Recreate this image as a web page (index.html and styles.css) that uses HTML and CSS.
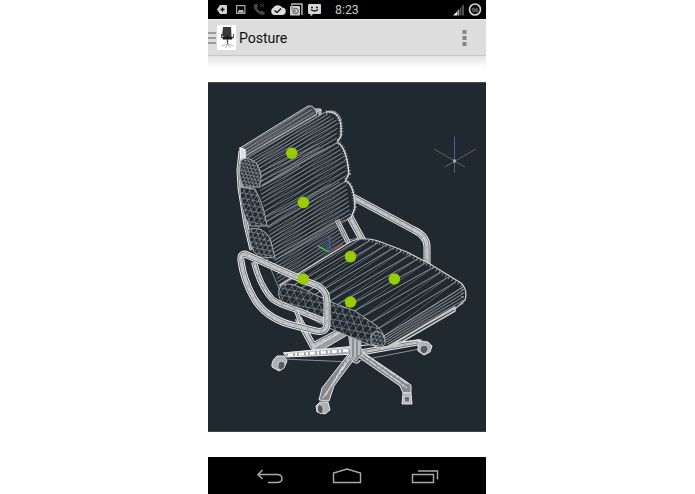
FILE: index.html
```html
<!DOCTYPE html>
<html lang="en">
<head>
<meta charset="utf-8">
<title>Posture</title>
<link rel="stylesheet" href="styles.css">
</head>
<body>
<main class="phone">
  <header class="status">
    <svg class="notifications" width="115" height="19" viewBox="208 0 115 19">
      <path d="M220 5h6q1 0 1 1v7q0 1-1 1h-6l-3-4.500z" fill="#d2d2d2"/><path d="M220.500 9.500h4M222.500 7.500v4" stroke="#111" stroke-width="1.300"/>
      <path d="M236 5h9.500v9H236zm1.200 1.200v6.600h7.100V6.200z" fill="#aaa" fill-rule="evenodd"/><path d="M237.500 12.500l2-3 1.500 1 1.500-1 1.500 3z" fill="#ccc"/>
      <path d="M255 4q-2 1-1 4 3 6 9 7 2 0 2-2l-3-2.500-2 1-3-3 1-2-1-2.500z" fill="#484848"/><path d="M260 7l4-3m0 3l-4-3" stroke="#3d3d3d"/>
      <path d="M274 15a4 4 0 0 1-.5-7.500 5 5 0 0 1 8.500 0 3.700 3.700 0 0 1 0 7.500z" fill="#ddd"/><path d="M274.500 10.500l2.500 2 4-4" fill="none" stroke="#222" stroke-width="1.500"/>
      <path d="M292 5.500V4h10v10h-1" fill="none" stroke="#bbb" stroke-width="1.500"/><rect x="290" y="6" width="10" height="9.500" rx="1" fill="#ccc"/><circle cx="295.500" cy="11" r="2.700" fill="none" stroke="#555"/><path d="M291 8h2m2 1.500v3" stroke="#555"/>
      <path d="M309 4h11q1 0 1 1v8q0 1-1 1h-7l-2.500 2.500V14H309q-1 0-1-1V5q0-1 1-1z" fill="#d5d5d5"/><path d="M311 7.500h2m3 0h2m-7 2q3.500 3 7 0" fill="none" stroke="#222" stroke-width="1.300"/>
    </svg>
    <time class="clock">8:23</time>
    <svg class="signal" width="36" height="19" viewBox="450 0 36 19">
      <path d="M453 15.500l4-4v4z" fill="#eee"/><path d="M457.300 11l2-2v6.500h-2z" fill="#aaa"/><path d="M459.800 8.500l1.700-1.700v8.700h-1.700zm2.200-2.200L464 4v11.500h-2z" fill="#505050"/>
      <circle cx="475" cy="9.500" r="5.500" fill="#111" stroke="#d8d8d8" stroke-width="1.600"/><text class="charge" x="475" y="11.700" text-anchor="middle">96</text>
    </svg>
  </header>
  <nav class="bar">
    <svg class="drawer" width="8" height="14" viewBox="0 0 8 14"><path d="M0 2h8M0 7h8M0 12h8" stroke="#858585" stroke-width="1.600"/></svg>
    <svg class="logo" width="19" height="25" viewBox="217 25 19 25">
      <path fill="#fff" d="M217 25h19v25h-19z"/><path d="M223 27h8l.5 9q-4.500 1.500-9.500 0z" fill="#3a3838"/><path d="M222 37q6-2 11 0l-1 2.500h-9z" fill="#1c1b1b"/><path d="M221.500 38v-4m12 4v-4" stroke="#555"/><path d="M227.500 39v5" stroke="#444" stroke-width="1.300"/><path d="M227.500 44l-6 2m6-2l6 2m-6-2l-2 4m2-4l3 4" fill="none" stroke="#aaa" stroke-width=".8"/>
    </svg>
    <h1 class="title">Posture</h1>
    <svg class="more" width="5" height="16" viewBox="0 0 5 16"><path d="M.5 0h4v4h-4zm0 6h4v4h-4zm0 6h4v4h-4z" fill="#858585"/></svg>
  </nav>
  <section class="content">
    <svg class="drawing" width="278" height="350" viewBox="208 82 278 350">
      <g id="axes" fill="none" stroke-width=".9">
        <path d="M454.500 136.500V173" stroke="#5960a0"/><path d="M434 149l31 18" stroke="#50745d"/><path d="M476 149l-31.500 18" stroke="#74606a"/><path d="M453 159.500h3v3h-3z" fill="#aaa"/>
      </g>
      <g id="base"></g>
      <g id="frame-back"></g>
      <g id="body"></g>
      <g id="origin" fill="none" stroke-width="1.400"><path d="M329.500 252V236" stroke="#3864ad"/><path d="M329 252l-11-6" stroke="#50c86a"/><path d="M330 252l13-8" stroke="#b84b48"/></g>
      <g id="frame-front"></g>
      <g fill="#9c0">
        <circle cx="291.700" cy="153.200" r="5.800"/><circle cx="303.400" cy="202.500" r="5.800"/><circle cx="350.500" cy="256.600" r="5.800"/><circle cx="303.400" cy="279" r="5.800"/><circle cx="394.400" cy="279" r="5.800"/><circle cx="350.500" cy="302" r="5.800"/>
      </g>
    </svg>
  </section>
  <footer class="keys">
    <svg width="278" height="37" viewBox="208 457 278 37" fill="none" stroke="#aaa" stroke-width="1.400">
      <path d="M262.500 470l-4.500 4.500 4.500 4.500M258 474.500h19q5 0 5 4t-5 4h-9"/>
      <path d="M333.500 482.500v-9.500l13.500-4 13.500 4v9.500z"/>
      <path d="M412.500 474.500h21v8h-21zM418 471h19.500v8.500"/>
    </svg>
  </footer>
</main>
<script src="chair.js"></script>
</body>
</html>
```
FILE: styles.css
```css
* { box-sizing: border-box; }
body { margin: 0; background: #fff; font-family: Roboto, "Liberation Sans", sans-serif; }
.phone { width: 278px; height: 494px; margin-left: 208px; display: flex; flex-direction: column; }
.status { height: 19px; background: #000; display: flex; align-items: center; flex: none; }
.clock { width: 50px; margin-left: 12px; color: #c9c9c9; font-size: 12.3px; line-height: 19px; padding-top: 1px; }
.signal { margin-left: auto; }
.charge { fill: #aaa; font-size: 6px; }
.bar { height: 37px; flex: none; background: #ddd; border-top: 1px solid #eee; border-bottom: 1px solid #c6c6c6; display: flex; align-items: center; }
.logo { margin-left: 1px; }
.title { margin: 0 0 0 3px; font-size: 14.2px; font-weight: 400; color: #111; letter-spacing: -.1px; padding-top: 1px; }
.more { margin: 0 19px 0 auto; }
.content { height: 401px; flex: none; padding-top: 26px; background: linear-gradient(#e5e5e5, #fff 12px); }
.drawing { display: block; background: #202830; box-shadow: inset 0 1px #444c53, inset 0 -1px #3a4249; }
.keys { height: 37px; flex: none; background: #000; }
.keys svg { display: block; }
```
FILE: chair.js
```js
const NS = "http://www.w3.org/2000/svg";
const layer = id => document.getElementById(id);

function add(parent, d, stroke, width, extra = {}) {
  const p = document.createElementNS(NS, "path");
  p.setAttribute("d", d);
  p.setAttribute("fill", extra.fill || "none");
  p.setAttribute("stroke", stroke);
  p.setAttribute("stroke-width", width);
  p.setAttribute("stroke-linejoin", "round");
  if (extra.dash) p.setAttribute("stroke-dasharray", extra.dash);
  if (extra.clip) p.setAttribute("clip-path", `url(#${extra.clip})`);
  parent.appendChild(p);
}

// Point at t (0..1) along a polyline whose points are evenly weighted.
function along(points, t) {
  const n = points.length - 1, i = Math.min(n - 1, Math.floor(t * n)), f = t * n - i;
  return [0, 1].map(k => points[i][k] + (points[i + 1][k] - points[i][k]) * f);
}

// Straight wires between two edges, each followed by a thin diagonal
// that reaches `skew` steps further down the left edge.
function rule(g, left, right, count, color, width = .7, skew = 1) {
  for (let i = 0; i <= count; i++) {
    const a = along(left, i / count), b = along(right, i / count);
    add(g, `M${a}L${b}`, color, width);
    const low = Math.min(count, i + skew);
    if (i < count) add(g, `M${along(left, low / count)}L${b}`, "#7c8286", .6);
  }
}

let clips = 0;
function mesh(g, shape, box, step) {
  const id = "mesh" + clips++;
  const clip = document.createElementNS(NS, "clipPath");
  clip.id = id;
  add(clip, shape, "none", 0, { fill: "#fff" });
  g.appendChild(clip);
  add(g, shape, "#b4b8ba", .9, { fill: "#202830" });
  const [x, y, w, h] = box;
  let d = "";
  for (let k = -h; k < w + h; k += step) d += `M${x + k},${y}l${h * .35},${h}M${x + k},${y}l${-h * .8},${h}`;
  for (let k = 0; k < h + w; k += step) d += `M${x},${y + k}l${w},${w * .2}`;
  add(g, d, "#a7abad", .5, { clip: id });
}

function tube(g, d, width, bright = "#ececec") {
  add(g, d, bright, width);
  add(g, d, "#555c62", width - 2);
  add(g, d, "#c4c7c8", Math.max(1, width - 3.400));
  add(g, d, "#8f9497", .8, { dash: "3 5 1 4" });
}

const base = layer("base");
tube(base, "M298 318L313 346L345 329", 7);
add(base, "M312 349L343 331L349 334L322 350Z", "#ddd", 1, { fill: "#9b9fa1" });
tube(base, "M352 354L420 342", 6);
add(base, "M282 359L352 362L430 347", "#a8abad", .8);
add(base, "M284 353L355 347L357 354L286 357Z", "#f0f0f0", 1, { fill: "#a5a8aa" });
add(base, "M288 355L354 350", "#fff", 3, { dash: "5 2 2 2" });
add(base, "M283 353L356 346L422 340", "#eee", 1);
// Tapered legs of the star base.
for (const [d, core] of [
  ["M350 352L358 354L334 386L329 401L319 400L322 388Z", "M355 351L323 398M351 353L325 396"],
  ["M354 354L358 349L401 378L411 385L411 393L403 393L400 386Z", "M357 352L407 388M363 353L408 384"]
]) {
  add(base, d, "#e6e6e6", 1, { fill: "#85898c" });
  add(base, core, "#d5d7d8", 1.300, { dash: "9 1 4 1" });
}
add(base, "M348 332L361 334L361 348L363 354L356 361L348 354L350 346Z", "#ddd", .8, { fill: "#8d9194" });
add(base, "M351 334V356M355 335V358M359 335V355", "#d8dada", 1.200);
add(base, "M351 359q4 7 9 2", "#ccc", 1.200);

// Wheel barrels, each seen from its own side.
add(base, "M277 356L284 356L287 361L284 368L279 371L272 367Q271 361 277 356Z", "#e6e6e6", 1, { fill: "#aeb1b3" });
add(base, "M279 362q5-2 6 2t-4 6q-5-1-2-8z", "#ddd", .8, { fill: "#555c61" });
add(base, "M420 341L428 342L432 346L430 352L424 355L418 351L418 346Z", "#e6e6e6", 1, { fill: "#aeb1b3" });
add(base, "M421 346q6-2 7 2t-4 6q-6-2-3-8z", "#ddd", .8, { fill: "#555c61" });
add(base, "M320 402L328 402L330 410L325 414L317 412L316 406Z", "#e6e6e6", 1, { fill: "#aeb1b3" });
add(base, "M318 405q4-1 5 3t-2 6q-5-2-3-9z", "#ddd", .8, { fill: "#555c61" });
add(base, "M403 393L411 393L412 404H402Z", "#e6e6e6", 1, { fill: "#aeb1b3" });
add(base, "M404.500 396.500h5v5.500h-5z", "#ddd", .8, { fill: "#666c70" });

const back = layer("frame-back");
tube(back, "M353 197L414 230Q427 236 427 247V265", 7);
tube(back, "M241 151L239 170L240 188L246 225L252 250", 5);
tube(back, "M316 113V110h4v7", 3);

const body = layer("body");
add(body, "M245 158L326 112Q337 108 341 119V137L337 143Q346 144 349 171L346 181Q354 181 355 207L351 218L340 222L348 240L363 237L280 291L268 262L259 229L250 190Z", "#a3a7aa", .8, { fill: "#202830" });
tube(body, "M337 220L350 246", 5);
tube(body, "M350 217L363 241", 7);
add(body, "M240 148L308 106Q315 105 317 114L243 157Z", "#d0d2d3", 1, { fill: "#444b51" });
rule(body, [[241, 149], [244, 157]], [[309, 107], [317, 115]], 3, "#9fa4a6", .7);
add(body, "M240 148l5 2v10h-4z", "#eee", 1.500, { fill: "#ddd" });
rule(body, [[248, 158], [259, 166], [262, 186]], [[325, 112], [338, 121], [336, 143]], 9, "#a5a9ab", .7, 2);
rule(body, [[259, 187], [263, 204], [267, 227]], [[337, 143], [345, 158], [346, 181]], 9, "#999ea1", .7, 2);
rule(body, [[268, 228], [275, 260]], [[346, 181], [351, 218]], 9, "#a0a5a8", .7, 2);
rule(body, [[273, 257], [279, 289]], [[334, 222], [349, 246]], 9, "#8d9295", .7, 2);
// Wires bunch up between the two upper cushions.
add(body, "M260 172L318 144M260 176L320 147M261 181L324 149M262 185L330 146M259 188L300 166M267 217L331 184M267 221L340 182", "#858a8d", .8);
// Padded right ends of the back cushions.
for (const d of ["M326 112Q343 110 341 136L337 142", "M337 142Q346 146 349 174L345 181", "M345 181Q354 183 355 208L351 218"]) {
  add(body, d, "#a4a8ab", 4, { dash: ".7 2.200" });
  add(body, d, "#e0e1e2", 1.200);
}
mesh(body, "M241 160Q248 155 257 164Q264 176 259 187L243 187Q237 176 241 160Z", [236, 155, 28, 35], 3.500);
mesh(body, "M240 187L255 189Q264 205 267 226L250 226Q240 211 240 187Z", [236, 186, 34, 43], 5.500);
mesh(body, "M249 229Q263 226 270 238L275 258L259 257Q247 247 249 229Z", [246, 226, 32, 36], 5);

// Seat cushion.
add(body, "M280 285L352 241Q364 236 381 242L407 252L430 264L461 283Q468 290 465 300L456 308L388 346L379 348L350 335L285 302Z", "#d5d7d8", 1.200, { fill: "#202830" });
rule(body, [[282, 285], [315, 297], [350, 310], [384, 336]], [[362, 238], [397, 248], [432, 265], [463, 287]], 13, "#a9adaf", .8, 1);
rule(body, [[384, 336], [388, 346]], [[463, 287], [464, 303]], 5, "#a2a6a9");
add(body, "M388 347L455 307V311L398 344L382 348", "#c8caca", 1.500);
add(body, "M365 239L382 244L407 254L430 266L459 284Q465 289 462 299", "#a8acaf", 3, { dash: ".7 3" });
mesh(body, "M280 287Q286 281 299 287L331 302L355 311L377 326Q389 338 383 346L370 345L329 328L283 304Q276 295 280 287Z", [276, 280, 112, 70], 7);
mesh(body, "M371 335Q377 328 383 335Q388 343 382 347L371 344Z", [368, 330, 20, 19], 4);

const front = layer("frame-front");
tube(front, "M254 262Q260 286 272 299Q278 304 294 309L325 321", 6);
tube(front, "M296 311l5 13", 4);
tube(front, "M245 254L303 280L318 286Q327 291 327 301V325Q326 333 316 331L296 326Q268 320 255 300Q244 282 241 261Q240 254 245 254Z", 7, "#f0f0f0");
```
